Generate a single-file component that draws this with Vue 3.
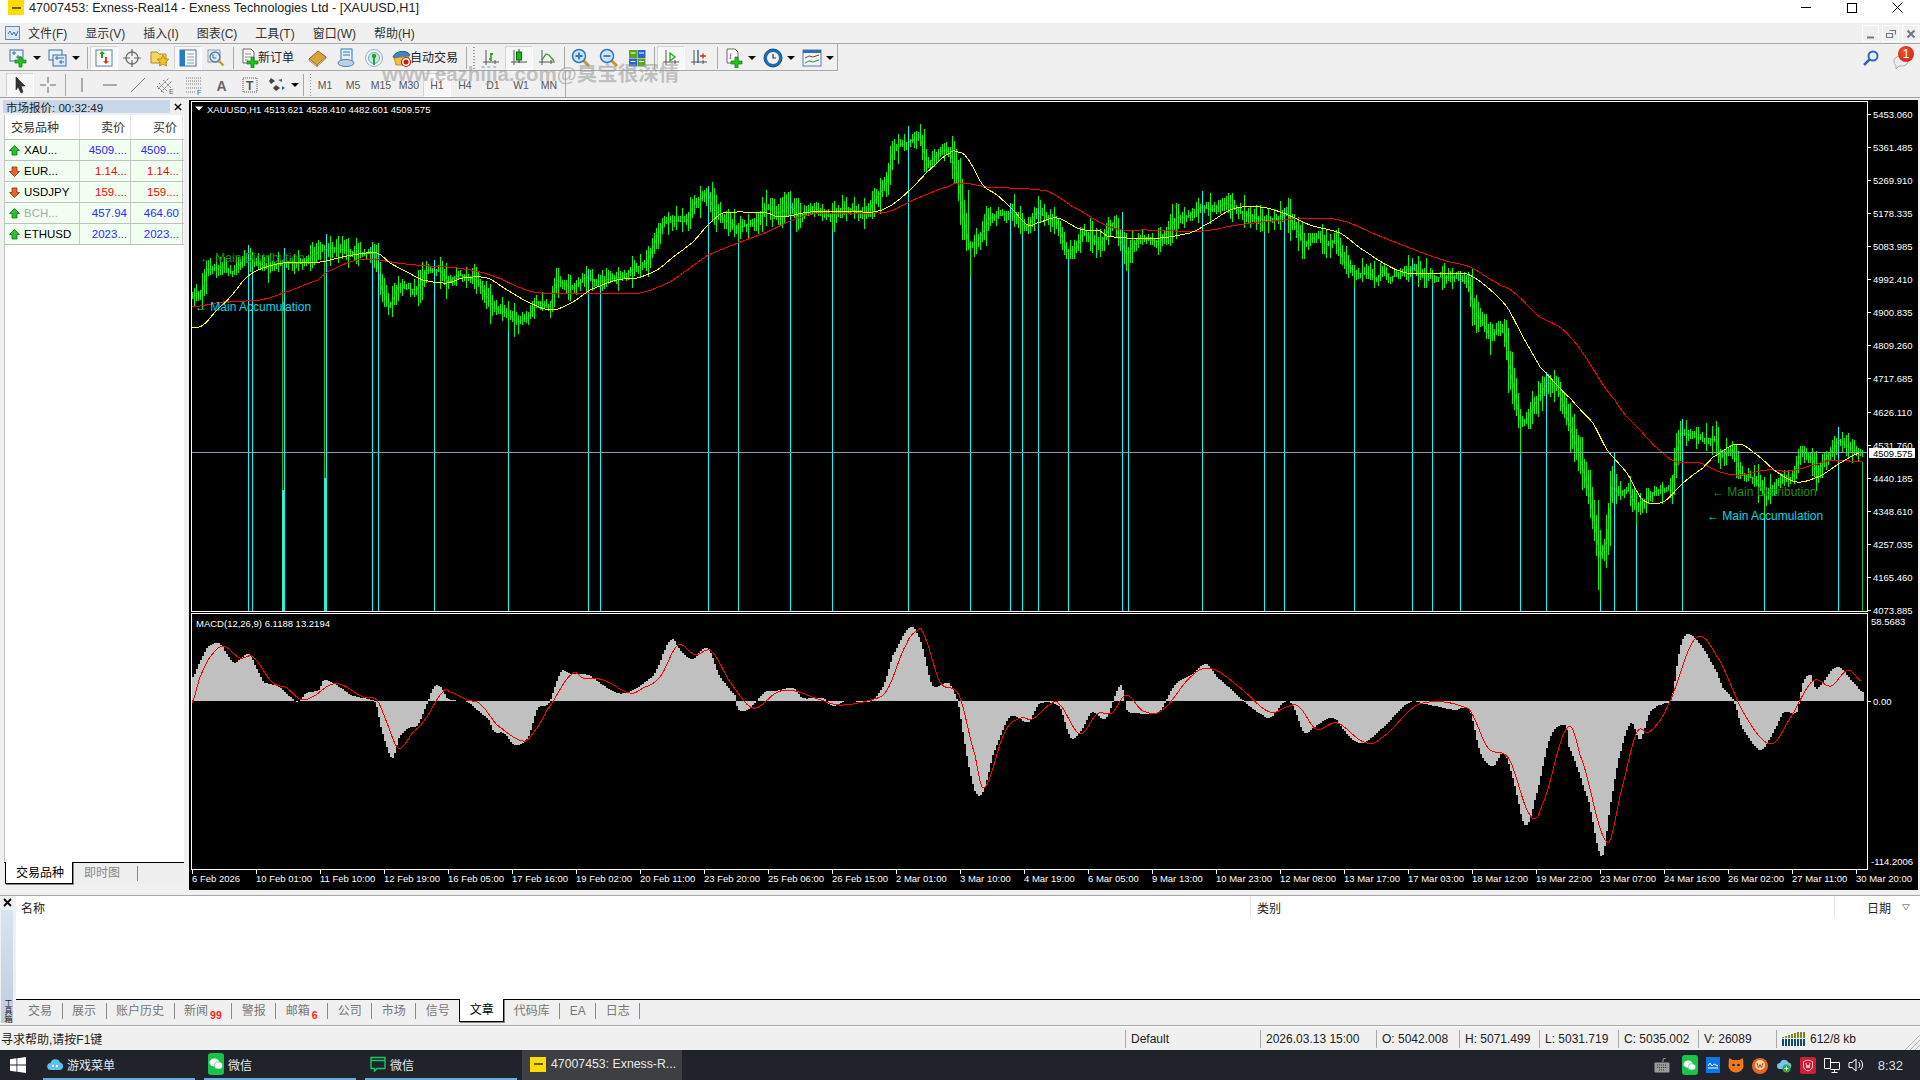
<script setup>
// -- Traced chart data (page pixels, x then y) --

const pricePts = [193,297,203,290,207,270,223,267,233,272,247,257,267,267,287,263,303,263,322,250,337,248,357,253,375,253,382,290,390,307,398,287,417,290,427,270,440,270,448,282,460,275,477,280,485,293,493,307,507,313,517,322,528,318,537,302,550,307,557,280,573,288,587,277,598,282,620,277,647,263,663,223,673,220,687,222,693,205,708,193,713,208,723,218,738,228,757,222,767,208,780,213,790,205,800,218,813,207,830,217,843,208,867,213,877,198,887,182,893,148,907,143,920,137,927,165,943,150,950,152,957,172,963,215,970,248,980,238,990,218,1003,215,1013,212,1027,228,1037,212,1057,222,1067,252,1077,248,1083,232,1100,245,1113,222,1127,255,1140,238,1160,242,1177,218,1187,217,1202,207,1213,210,1227,203,1243,213,1263,220,1277,220,1287,213,1297,230,1305,245,1317,235,1327,245,1337,240,1343,260,1357,273,1370,273,1377,280,1383,270,1390,278,1403,273,1413,268,1423,275,1437,277,1453,277,1468,282,1475,313,1483,322,1490,337,1498,330,1505,333,1508,360,1513,383,1520,420,1527,420,1537,400,1547,383,1557,385,1567,417,1580,457,1590,497,1600,557,1607,540,1612,487,1620,493,1628,490,1637,507,1645,500,1657,490,1672,490,1677,450,1682,433,1697,437,1717,440,1720,457,1733,450,1740,473,1757,480,1765,495,1777,483,1793,477,1802,450,1813,460,1817,473,1827,457,1840,440,1853,450,1862,453];

const yellowPts = [192,328,203,325,217,310,230,297,247,277,263,268,283,263,320,262,347,256,377,253,390,263,407,272,423,280,447,283,463,278,487,278,507,290,530,303,552,310,573,302,590,290,617,280,637,278,657,270,673,257,693,242,708,225,723,213,767,213,780,217,810,212,847,211,873,212,890,206,910,190,927,172,950,153,958,152,967,158,983,185,997,195,1013,210,1028,225,1037,223,1057,218,1080,229,1100,231,1107,236,1127,238,1160,238,1190,233,1203,226,1233,209,1260,207,1283,213,1310,225,1340,233,1360,248,1387,265,1407,273,1467,274,1487,287,1507,307,1523,337,1540,367,1572,400,1593,423,1607,450,1627,473,1643,500,1663,502,1683,483,1703,468,1713,457,1738,444,1757,455,1777,472,1797,482,1820,476,1840,463,1862,452];

const redPts = [192,307,223,302,260,300,283,293,318,280,327,272,350,262,370,259,397,263,427,266,457,268,490,275,533,292,590,293,640,293,670,282,690,268,708,255,738,243,767,232,793,220,813,214,887,212,913,200,947,187,960,183,987,187,1047,191,1073,207,1113,228,1147,230,1203,231,1237,225,1283,220,1317,218,1343,221,1377,235,1410,248,1443,260,1470,267,1497,283,1513,292,1537,315,1570,337,1615,400,1640,430,1663,453,1677,462,1700,463,1720,472,1740,475,1767,470,1790,471,1817,464,1833,460,1862,462];

const histPts = [192,677,200,660,207,647,218,643,227,655,233,663,248,654,255,667,263,682,277,686,290,697,297,702,305,693,318,690,323,680,337,686,350,695,367,699,375,703,380,727,387,750,392,758,398,738,408,728,417,725,427,702,433,687,440,687,447,699,467,702,480,713,488,720,493,732,503,733,513,745,527,738,537,708,548,703,560,672,570,674,587,675,607,688,623,693,653,675,670,640,680,651,691,659,707,648,718,675,734,695,737,710,749,708,764,692,774,691,793,688,801,698,823,698,831,706,845,701,871,701,883,685,892,655,910,627,921,645,931,685,948,683,957,702,963,738,969,772,975,793,982,792,992,755,1009,717,1028,722,1038,704,1059,707,1070,738,1082,728,1091,712,1105,718,1120,685,1126,710,1135,713,1158,712,1174,685,1193,673,1205,664,1216,677,1242,700,1262,715,1270,717,1285,701,1293,708,1303,733,1316,725,1333,718,1347,735,1360,743,1379,730,1408,703,1423,704,1454,710,1469,710,1479,752,1492,766,1503,753,1513,782,1524,825,1534,800,1549,738,1565,725,1568,747,1588,802,1601,857,1609,808,1618,758,1630,723,1639,740,1649,712,1664,703,1671,698,1679,648,1687,634,1702,648,1716,672,1722,688,1733,701,1741,728,1760,750,1775,728,1783,712,1796,712,1802,683,1810,675,1815,689,1836,667,1855,685,1863,693];

const signalPts = [192,703,200,677,210,657,223,646,240,658,253,657,272,682,287,688,300,699,312,697,330,685,342,685,363,697,377,700,387,723,397,747,403,746,413,732,423,722,443,692,450,692,467,700,480,704,497,725,523,741,533,733,547,710,572,674,583,678,603,680,630,693,643,688,660,677,678,645,695,655,711,651,730,682,753,708,778,692,795,691,812,697,839,705,871,700,887,690,906,645,917,631,923,633,940,682,959,695,975,755,984,788,1005,732,1021,718,1032,719,1051,704,1059,704,1080,734,1097,714,1112,713,1126,695,1143,711,1162,710,1193,675,1212,669,1239,687,1270,712,1289,706,1299,707,1316,729,1337,723,1364,742,1381,738,1419,704,1469,709,1488,748,1509,759,1530,815,1542,805,1567,728,1580,755,1607,842,1622,788,1637,732,1649,732,1668,705,1695,639,1716,655,1745,715,1771,744,1790,718,1813,681,1831,686,1848,670,1861,681];

// x and top of each signal line (all run down to the pane bottom)
const signalLines = [
  [248,245],[252,267],[284,248],[326,234],[372,246],[378,254],[434,260],[508,331],[588,269],[600,287],
  [708,187],[738,242],[790,198],[832,230],[908,126],[970,277],[1010,203],[1022,235],[1038,208],[1068,258],
  [1122,212],[1128,271],[1202,191],[1264,232],[1284,208],[1354,287],[1412,261],[1432,285],[1460,271],
  [1520,455],[1546,372],[1600,600],[1614,452],[1636,525],[1682,419],[1764,518],[1838,427]
];

const priceTicks = ['5453.060','5361.485','5269.910','5178.335','5083.985','4992.410','4900.835','4809.260','4717.685','4626.110','4531.760','4440.185','4348.610','4257.035','4165.460','4073.885']
  .map((label, i) => ({ label, y: Math.round(114 + i * 33.06) }));

const timeLabels = ['6 Feb 2026','10 Feb 01:00','11 Feb 10:00','12 Feb 19:00','16 Feb 05:00','17 Feb 16:00','19 Feb 02:00','20 Feb 11:00','23 Feb 20:00','25 Feb 06:00','26 Feb 15:00','2 Mar 01:00','3 Mar 10:00','4 Mar 19:00','6 Mar 05:00','9 Mar 13:00','10 Mar 23:00','12 Mar 08:00','13 Mar 17:00','17 Mar 03:00','18 Mar 12:00','19 Mar 22:00','23 Mar 07:00','24 Mar 16:00','26 Mar 02:00','27 Mar 11:00','30 Mar 20:00']
  .map((label, i) => ({ label, x: 192 + i * 64 }));

// -- Chart helpers --

// Catmull-Rom through the traced points so the curves don't look polygonal
function smooth(flat) {
  const out = [];
  const n = flat.length / 2;
  for (let i = 0; i < n - 1; i++) {
    const x0 = flat[i * 2], x1 = flat[i * 2 + 2];
    const a = flat[Math.max(i - 1, 0) * 2 + 1];
    const b = flat[i * 2 + 1];
    const c = flat[i * 2 + 3];
    const d = flat[Math.min(i + 2, n - 1) * 2 + 1];
    const steps = Math.max(Math.round((x1 - x0) / 2), 1);
    for (let s = 0; s < steps; s++) {
      const t = s / steps;
      const y = 0.5 * (2 * b + (c - a) * t + (2 * a - 5 * b + 4 * c - d) * t * t + (3 * b - a - 3 * c + d) * t * t * t);
      out.push(x0 + (x1 - x0) * t, Math.round(y * 10) / 10);
    }
  }
  out.push(flat[flat.length - 2], flat[flat.length - 1]);
  return out;
}

function toPoints(flat) {
  const out = [];
  for (let i = 0; i < flat.length; i += 2) out.push(flat[i] + ',' + flat[i + 1]);
  return out.join(' ');
}

function valueAt(flat, x) {
  for (let i = 0; i < flat.length - 2; i += 2) {
    if (x <= flat[i + 2]) {
      const t = (x - flat[i]) / (flat[i + 2] - flat[i]);
      return flat[i + 1] + Math.max(t, 0) * (flat[i + 3] - flat[i + 1]);
    }
  }
  return flat[flat.length - 1];
}

// Small seeded random so the bars stay the same between runs
let seed = 47007453;
function rnd() {
  seed = (seed * 1664525 + 1013904223) % 4294967296;
  return seed / 4294967296;
}

function buildBars() {
  let d = '';
  for (let x = 192; x < 1864; x += 2) {
    const c = valueAt(pricePts, x);
    const slope = Math.abs(valueAt(pricePts, x + 3) - valueAt(pricePts, x - 3)) / 6;
    const r = rnd();
    const half = 2.5 + r * r * r * 13 + slope * 3;
    const shift = (rnd() - 0.5) * 6;
    d += `M${x}.5 ${Math.round(c + shift - half)}V${Math.round(c + shift + half)}`;
  }
  // The bar behind a signal line reaches down to where the line starts
  for (const [x, top] of signalLines) {
    d += `M${x}.5 ${Math.round(valueAt(pricePts, x))}V${top}`;
  }
  return d;
}

function buildHist() {
  const dense = smooth(histPts);
  let d = '';
  for (let x = 192; x < 1864; x += 2) {
    d += `M${x + 1} 701V${Math.round(valueAt(dense, x))}`;
  }
  return d;
}

const barsPath = buildBars();
const histPath = buildHist();
const pricePoly = toPoints(pricePts);
const yellowPoly = toPoints(smooth(yellowPts));
const redPoly = toPoints(smooth(redPts));
const signalPoly = toPoints(smooth(signalPts));

// -- Toolbar icons --

const axes = '<path d="M5 2v15M2 14h16M14 12v4" stroke="#555" fill="none"/>';

const icons = {
  addChart: '<rect x="1" y="2" width="13" height="11" fill="#eaf1fa" stroke="#3a6ea8"/><path d="M3 5h4M5 3v4M7 9h5M9 7v4" stroke="#3a6ea8"/><path d="M10 9h3v3h4v3h-4v4h-3v-4H6v-3h4z" fill="#1cc41c" stroke="#0a7a0a" stroke-width=".7"/>',
  profile: '<rect x="1" y="2" width="13" height="10" fill="#eaf1fa" stroke="#3a6ea8"/><rect x="5" y="7" width="13" height="11" fill="#dfe9f6" stroke="#3a6ea8"/><path d="M7 10h9M9 8v4M11 14h5M13 12v4" stroke="#3a6ea8"/>',
  scroll: '<rect x="2" y="2" width="16" height="16" fill="#fff" stroke="#5f7f9f"/><path d="M8 3l3 3H9v4H7V6H5z" fill="#19a019"/><path d="M12 16l-3-3h2V9h2v4h2z" fill="#d8401c"/>',
  crosshair: '<circle cx="10" cy="10" r="6" fill="none" stroke="#777" stroke-width="1.4"/><path d="M10 1v7M10 12v7M1 10h7M12 10h7" stroke="#666" stroke-width="1.2"/>',
  folder: '<path d="M1 4h6l2 2h7v9H1z" fill="#f6d666" stroke="#b08a20"/><path d="M13 7l1.8 3.6 4 .6-2.9 2.8.7 4-3.6-1.9-3.6 1.9.7-4-2.9-2.8 4-.6z" fill="#f2c020" stroke="#a07a10" stroke-width=".7"/>',
  market: '<rect x="2" y="2" width="16" height="16" fill="#fff" stroke="#4a6c94"/><rect x="2" y="2" width="5" height="16" fill="#2a78c8"/><path d="M9 6h7M9 9h7M9 12h7M9 15h7" stroke="#7a93b0"/>',
  tester: '<rect x="2" y="2" width="12" height="12" fill="#f2f2f2" stroke="#8b9bad"/><circle cx="9" cy="9" r="5" fill="#d5e6f7" stroke="#4d7ba8" stroke-width="1.3"/><path d="M12.5 12.5l5 5" stroke="#c79a30" stroke-width="2.4"/><path d="M7 6v4h3" stroke="#4d7ba8" fill="none"/>',
  newOrder: '<path d="M3 1h8l3 3v11H3z" fill="#fff" stroke="#666"/><path d="M5 6h6M5 9h6M5 12h3" stroke="#888"/><path d="M11 9h3v4h4v3h-4v4h-3v-4H7v-3h4z" fill="#1cc41c" stroke="#0a7a0a" stroke-width=".7"/>',
  book: '<path d="M1 11l9-8 8 6-9 8z" fill="#d6a53a" stroke="#8a6418"/><path d="M1 11l8 6v1.5L1 12.5zM18 9v1.5L9 18.500V17z" fill="#f3e3a8" stroke="#8a6418" stroke-width=".6"/>',
  people: '<rect x="5" y="1" width="11" height="13" fill="#e6f0fb" stroke="#2f78c0"/><path d="M7 4h7M7 7h7" stroke="#2f78c0"/><ellipse cx="10" cy="15" rx="8" ry="3.500" fill="#bcd2ea" stroke="#5a7fa6"/>',
  signal: '<circle cx="10" cy="10" r="8.500" fill="#eef3f6" stroke="#9ab2c0"/><circle cx="10" cy="10" r="5.500" fill="#cfe7d8" stroke="#6cb0c0"/><path d="M10 9v8" stroke="#2a9a3a" stroke-width="2"/><circle cx="10" cy="8" r="2.200" fill="#2a9a3a"/>',
  autotrade: '<path d="M1 9c2-6 14-8 17-2-4 3-13 4-17 2z" fill="#3a86c8" stroke="#1c5a90"/><path d="M2 10l2 7h9l4-9z" fill="#f0c040" stroke="#a07a10" stroke-width=".7"/><circle cx="14" cy="14" r="4.500" fill="#fff" stroke="#d01818" stroke-width="1.200"/><circle cx="14" cy="14" r="2.500" fill="#d01818"/>',
  bars: axes + '<path d="M10 5v8M8 11h2M10 6h2" stroke="#0e9a0e" stroke-width="1.400" fill="none"/>',
  candle: axes.replace('M14 12v4', '') + '<path d="M10 1v14" stroke="#333"/><rect x="7.500" y="4" width="5" height="8" fill="#12c012" stroke="#0a6a0a"/>',
  lineChart: axes + '<path d="M5 12l4-6 3 1 5 6" stroke="#2f9a2f" stroke-width="1.300" fill="none"/>',
  zoomIn: '<path d="M12 12l6 6" stroke="#c79a30" stroke-width="3"/><circle cx="8" cy="8" r="6.500" fill="#cfe4f8" stroke="#2f78c0" stroke-width="1.500"/><path d="M4.500 8h7M8 4.500v7" stroke="#2f78c0" stroke-width="1.800"/>',
  zoomOut: '<path d="M12 12l6 6" stroke="#c79a30" stroke-width="3"/><circle cx="8" cy="8" r="6.500" fill="#cfe4f8" stroke="#2f78c0" stroke-width="1.500"/><path d="M4.500 8h7" stroke="#2f78c0" stroke-width="1.800"/>',
  tile: '<rect x="2" y="2" width="8" height="8" fill="#56a818"/><rect x="10.500" y="2" width="8" height="8" fill="#2a64c8"/><rect x="2" y="10.500" width="8" height="8" fill="#2a64c8"/><rect x="10.500" y="10.500" width="8" height="8" fill="#56a818"/><path d="M3.500 5h5M12 5h5M3.500 13.500h5M12 13.500h5" stroke="#fff"/>',
  shift: axes + '<path d="M9 5l5 4-5 4z" fill="none" stroke="#1ca81c" stroke-width="1.300"/>',
  autoShift: axes + '<path d="M9 2v13" stroke="#2a5aa8" stroke-width="1.400"/><path d="M11 8h6M14 5.500v5" stroke="#c83a1c" stroke-width="1.500"/>',
  template: '<path d="M3 1h8l3 3v11H3z" fill="#fff" stroke="#666"/><text x="5" y="11" font-size="9" font-family="Liberation Serif" fill="#444">f</text><path d="M11 9h3v4h4v3h-4v4h-3v-4H7v-3h4z" fill="#1cc41c" stroke="#0a7a0a" stroke-width=".7"/>',
  clock: '<circle cx="10" cy="10" r="9" fill="#1c6cb8" stroke="#124a86"/><circle cx="10" cy="10" r="6" fill="#f4f4f4"/><path d="M10 6v4h3" stroke="#333" stroke-width="1.200" fill="none"/>',
  indicators: '<rect x="1" y="2" width="18" height="16" fill="#eef3f9" stroke="#5f7f9f"/><rect x="1" y="2" width="18" height="3" fill="#2f6cb8"/><path d="M3 10l4-2 4 1 6-2" stroke="#a03a1c" fill="none"/><path d="M3 15l4-2 4 1 6-2" stroke="#2a9a3a" fill="none"/>',
  cursor: '<path d="M6 2l9 9h-4l2 6-2 1-3-6-2 3z" fill="#333" stroke="#222" stroke-width=".6"/>',
  cross: '<path d="M10 2v6M10 12v6M2 10h6M12 10h6" stroke="#666"/>',
  vline: '<path d="M10 3v14" stroke="#666"/>',
  hline: '<path d="M3 10h14" stroke="#666"/>',
  trend: '<path d="M3 17L17 3" stroke="#777"/>',
  channel: '<path d="M2 14L13 3M5 17L16 6M3 8l8 8M7 5l8 8M1 11l7 7" stroke="#777" stroke-dasharray="2 1"/><text x="13" y="19" font-size="7" font-family="Liberation Sans" fill="#555">E</text>',
  fibo: '<path d="M2 3h15M2 6h15M2 9h15M2 13h15M2 17h10" stroke="#777" stroke-dasharray="1 1"/><text x="13" y="20" font-size="7" font-family="Liberation Sans" fill="#555">F</text>',
  textA: '<text x="4.500" y="16" font-size="14" font-weight="700" font-family="Liberation Sans" fill="#666">A</text>',
  textT: '<rect x="3" y="3" width="14" height="14" fill="none" stroke="#555" stroke-dasharray="1 1"/><text x="6" y="15" font-size="12" font-weight="700" font-family="Liberation Sans" fill="#555">T</text>',
  arrows: '<path d="M4 3l4 3-4 3-2-3zM9 10l4 3-4 3-3-3z" fill="#444"/><path d="M11 5l4-1v3zM15 11l3 2-3 2z" fill="#2a6a9a"/>'
};

const mainTools = [
  { icon: 'addChart', drop: true }, { icon: 'profile', drop: true }, { sep: true },
  { icon: 'scroll', active: true }, { icon: 'crosshair' }, { icon: 'folder' }, { icon: 'market', active: true }, { icon: 'tester' }, { sep: true },
  { icon: 'newOrder', label: '新订单', w: 68 }, { icon: 'book' }, { icon: 'people' }, { icon: 'signal' },
  { icon: 'autotrade', label: '自动交易', w: 78 }, { grip: true },
  { icon: 'bars' }, { icon: 'candle', active: true }, { icon: 'lineChart' }, { sep: true },
  { icon: 'zoomIn' }, { icon: 'zoomOut' }, { icon: 'tile' }, { sep: true },
  { icon: 'shift', active: true }, { icon: 'autoShift' }, { sep: true, wide: true },
  { icon: 'template', drop: true }, { icon: 'clock', drop: true }, { icon: 'indicators', drop: true }
];

const drawTools = [
  { icon: 'cursor', active: true }, { icon: 'cross' }, { sep: true },
  { icon: 'vline' }, { icon: 'hline' }, { icon: 'trend' }, { icon: 'channel' }, { icon: 'fibo' }, { icon: 'textA' }, { icon: 'textT' },
  { icon: 'arrows', drop: true }, { grip: true },
  { period: 'M1' }, { period: 'M5' }, { period: 'M15' }, { period: 'M30' }, { period: 'H1', active: true },
  { period: 'H4' }, { period: 'D1' }, { period: 'W1' }, { period: 'MN' }
];

const menus = ['文件(F)', '显示(V)', '插入(I)', '图表(C)', '工具(T)', '窗口(W)', '帮助(H)'];

const quotes = [
  { name: 'XAU...', bid: '4509....', ask: '4509....', up: true },
  { name: 'EUR...', bid: '1.14...', ask: '1.14...', up: false },
  { name: 'USDJPY', bid: '159....', ask: '159....', up: false },
  { name: 'BCH...', bid: '457.94', ask: '464.60', up: true, off: true },
  { name: 'ETHUSD', bid: '2023...', ask: '2023...', up: true }
];

const termTabs = [
  { name: '交易' }, { name: '展示' }, { name: '账户历史' }, { name: '新闻', badge: '99' }, { name: '警报' },
  { name: '邮箱', badge: '6' }, { name: '公司' }, { name: '市场' }, { name: '信号' }, { name: '文章', active: true },
  { name: '代码库' }, { name: 'EA' }, { name: '日志' }
];

const statusCells = [
  { text: 'Default', w: 135 }, { text: '2026.03.13 15:00', w: 116 }, { text: 'O: 5042.008', w: 83 },
  { text: 'H: 5071.499', w: 80 }, { text: 'L: 5031.719', w: 79 }, { text: 'C: 5035.002', w: 80 }, { text: 'V: 26089', w: 78 }
];
</script>

<template>
  <div class="app">
    <!-- Window title -->
    <header class="titlebar">
      <span class="mt-icon"><i></i></span>
      <span class="title-text">47007453: Exness-Real14 - Exness Technologies Ltd - [XAUUSD,H1]</span>
      <div class="win-btns">
        <svg width="46" height="16" viewBox="0 0 46 16"><path d="M18 7.500h10" stroke="#000" /></svg>
        <svg width="46" height="16" viewBox="0 0 46 16"><rect x="18.500" y="3.500" width="9" height="9" fill="none" stroke="#000" /></svg>
        <svg width="45" height="16" viewBox="0 0 45 16"><path d="M17.500 2.500l10 10M27.500 2.500l-10 10" stroke="#000" /></svg>
      </div>
    </header>

    <!-- Menu -->
    <nav class="menubar">
      <svg class="doc-icon" width="16" height="16" viewBox="0 0 16 16">
        <rect x=".5" y="1.500" width="14" height="13" fill="#dfe9f6" stroke="#6a8cb4" />
        <path d="M3 9l2-3 2 4 2-3 2 4 2-5" fill="none" stroke="#3a6ea8" />
      </svg>
      <span v-for="m in menus" :key="m" class="menu-item">{{ m }}</span>
      <div class="mdi-btns">
        <span class="mdi-btn"><svg width="10" height="10" viewBox="0 0 10 10"><path d="M1 8.500h7" stroke="#6a7a8a" stroke-width="2" /></svg></span>
        <span class="mdi-btn"><svg width="10" height="10" viewBox="0 0 10 10"><path d="M3.500 1.500h6v4M.5 4.500h6v4h-6z" fill="none" stroke="#6a7a8a" stroke-width="1.200" /></svg></span>
        <span class="mdi-btn"><svg width="10" height="10" viewBox="0 0 10 10"><path d="M1.500 1.500l7 7M8.500 1.500l-7 7" stroke="#6a7a8a" stroke-width="2" /></svg></span>
      </div>
    </nav>

    <!-- Toolbars -->
    <div class="toolrow toolrow-main">
      <div class="tools tools-main">
        <template v-for="(t, i) in mainTools" :key="i">
          <span v-if="t.sep" class="sep" :class="{ 'sep-wide': t.wide }"></span>
          <span v-else-if="t.grip" class="grip"></span>
          <span v-else class="tb" :class="{ active: t.active, drop: t.drop, labeled: t.label }" :style="t.w ? { width: t.w + 'px' } : null">
            <svg class="ic" viewBox="0 0 20 20" width="20" height="20" v-html="icons[t.icon]"></svg>
            <span v-if="t.label" class="tb-label">{{ t.label }}</span>
            <i v-if="t.drop" class="caret"></i>
          </span>
        </template>
      </div>
      <div class="tools-right">
        <svg width="18" height="18" viewBox="0 0 18 18">
          <circle cx="11" cy="7" r="4.500" fill="#eef5fc" stroke="#2a64c8" stroke-width="2" />
          <path d="M7.500 10.500L2 16" stroke="#2a64c8" stroke-width="2.500" />
        </svg>
        <span class="bubble">
          <svg width="16" height="14" viewBox="0 0 16 14"><path d="M8 1c4 0 7 2 7 5s-3 5-7 5H6l-3 3v-3.500C1.500 9.500 1 8 1 6c0-3 3-5 7-5z" fill="#eee" stroke="#aaa" /></svg>
          <b class="badge">1</b>
        </span>
      </div>
    </div>
    <div class="toolrow toolrow-draw">
      <div class="tools tools-draw">
        <template v-for="(t, i) in drawTools" :key="i">
          <span v-if="t.sep" class="sep"></span>
          <span v-else-if="t.grip" class="grip grip-draw"></span>
          <span v-else-if="t.period" class="tb period" :class="{ active: t.active }">{{ t.period }}</span>
          <span v-else class="tb" :class="{ active: t.active, drop: t.drop }">
            <svg class="ic" viewBox="0 0 20 20" width="20" height="20" v-html="icons[t.icon]"></svg>
            <i v-if="t.drop" class="caret"></i>
          </span>
        </template>
      </div>
    </div>
    <div class="watermark">www.eazhijia.com@臭宝很深情</div>

    <!-- Market watch and chart -->
    <main class="workspace">
      <aside class="market">
        <div class="market-head">
          <span class="market-title">市场报价: 00:32:49</span>
          <svg width="8" height="8" viewBox="0 0 9 9"><path d="M1 1l7 7M8 1l-7 7" stroke="#000" stroke-width="1.600" /></svg>
        </div>
        <div class="market-body">
          <div class="mrow mrow-head">
            <span class="mcell mname">交易品种</span>
            <span class="mcell mnum">卖价</span>
            <span class="mcell mnum">买价</span>
          </div>
          <div v-for="q in quotes" :key="q.name" class="mrow">
            <span class="mcell mname" :class="{ off: q.off }">
              <svg width="11" height="11" viewBox="0 0 11 11">
                <path v-if="q.up" d="M5.500 .5l5 5H8v4.500H3V5.500H.5z" fill="#2cc02c" stroke="#1a6a1a" stroke-width=".8" />
                <path v-else d="M5.500 10.500l5-5H8V1H3v4.500H.5z" fill="#f0602c" stroke="#8a3010" stroke-width=".8" />
              </svg>
              {{ q.name }}
            </span>
            <span class="mcell mnum" :class="q.up ? 'blue' : 'red'">{{ q.bid }}</span>
            <span class="mcell mnum" :class="q.up ? 'blue' : 'red'">{{ q.ask }}</span>
          </div>
        </div>
        <div class="market-tabs">
          <span class="mtab active">交易品种</span>
          <span class="mtab">即时图</span>
        </div>
      </aside>

      <div class="chart">
        <svg width="1729" height="790" viewBox="189 100 1729 790" class="chart-svg" shape-rendering="crispEdges">
          <!-- Price pane -->
          <polyline :points="pricePoly" fill="none" stroke="#0a7a0a" />
          <path :d="barsPath" stroke="#00ff00" fill="none" />
          <path d="M1600.500 530V600M1598.500 500V590M968.500 190V250" stroke="#00ff00" />
          <path d="M282.500 263V611M324.500 250V611" stroke="#1fc01f" />
          <path d="M282.500 490V611M283.500 490V611M324.500 478V611M325.500 478V611" stroke="#38f0c8" />
          <path d="M1862.500 462V611" stroke="#1fc01f" />
          <path v-for="l in signalLines" :key="l[0]" :d="`M${l[0]}.5 ${l[1]}V611`" stroke="#00ffff" />
          <polyline :points="redPoly" fill="none" stroke="#ff0000" />
          <polyline :points="yellowPoly" fill="none" stroke="#ffff00" />
          <path d="M192 452.500H1867" stroke="#8a9db0" />

          <!-- MACD pane -->
          <path :d="histPath" stroke="#c0c0c0" stroke-width="2" fill="none" />
          <polyline :points="signalPoly" fill="none" stroke="#ff0000" />

          <!-- Frames and ticks -->
          <g stroke="#fff" fill="none">
            <path d="M191.500 101.500H1867.500V611.500H191.500Z" />
            <path d="M191.500 613.500H1867.500V869.500H191.500Z" />
            <path v-for="t in priceTicks" :key="t.label" :d="`M1868 ${t.y}.5h3`" />
            <path d="M1868 701.500h3" />
            <path v-for="t in timeLabels" :key="t.x" :d="`M${t.x}.5 870v4`" />
          </g>

          <g class="labels" shape-rendering="auto">
            <path d="M195 106.500h8l-4 4z" fill="#fff" />
            <text x="207" y="112.500" class="lbl">XAUUSD,H1  4513.621 4528.410 4482.601 4509.575</text>
            <text x="196" y="627" class="lbl">MACD(12,26,9) 6.1188 13.2194</text>
            <text v-for="t in priceTicks" :key="t.label" x="1873" :y="t.y + 3.5" class="lbl">{{ t.label }}</text>
            <text x="1871" y="625" class="lbl">58.5683</text>
            <text x="1873" y="704.500" class="lbl">0.00</text>
            <text x="1871" y="865" class="lbl">-114.2006</text>
            <text v-for="t in timeLabels" :key="t.x" :x="t.x" y="881.500" class="lbl">{{ t.label }}</text>
            <rect x="1869" y="448" width="46" height="10" fill="#fff" />
            <text x="1873" y="456.500" class="lbl lbl-dark">4509.575</text>
            <text x="200" y="262" class="note note-green">← Main Distribution</text>
            <text x="195" y="311" class="note note-cyan">← Main Accumulation</text>
            <text x="1712" y="496" class="note note-green">← Main Distribution</text>
            <text x="1707" y="520" class="note note-cyan">← Main Accumulation</text>
          </g>
        </svg>
      </div>
    </main>

    <!-- Terminal -->
    <section class="terminal">
      <div class="term-side">
        <svg class="term-close" width="9" height="9" viewBox="0 0 9 9"><path d="M1 1l7 7M8 1l-7 7" stroke="#000" stroke-width="1.800" /></svg>
        <div class="term-grad"><span class="term-name">工具箱</span></div>
      </div>
      <div class="term-main">
        <div class="term-list">
          <div class="term-head">
            <span class="th th-name">名称</span>
            <span class="th th-type">类别</span>
            <span class="th th-date">日期
              <svg width="8" height="8" viewBox="0 0 8 8"><path d="M.5 1.500h7L4 7z" fill="none" stroke="#999" /></svg>
            </span>
          </div>
        </div>
        <div class="term-tabs">
          <span v-for="t in termTabs" :key="t.name" class="ttab" :class="{ active: t.active }">
            {{ t.name }}<sub v-if="t.badge" class="ttab-badge">{{ t.badge }}</sub>
          </span>
        </div>
      </div>
    </section>

    <!-- Status bar -->
    <footer class="statusbar">
      <span class="st-help">寻求帮助,请按F1键</span>
      <span v-for="c in statusCells" :key="c.text" class="st-cell" :style="{ width: c.w + 'px' }">{{ c.text }}</span>
      <span class="st-cell st-mem">
        <svg width="24" height="14" viewBox="0 0 24 14" shape-rendering="crispEdges">
          <path d="M1 14V7M4 14V7M7 14V7M10 14V7M13 14V7M16 14V7M19 14V7M22 14V7" stroke="#0e4a6e" stroke-width="2" />
          <path d="M1 6V5M4 6V4M7 6V3M10 6V2M13 6V1M16 6V0M19 6V0M22 6V0" stroke="#7a8a1a" stroke-width="2" />
        </svg>
        612/8 kb
      </span>
      <svg class="st-grip" width="15" height="20" viewBox="0 0 15 20"><path d="M15 5L0 20M15 10L5 20M15 15L10 20" stroke="#b0b0b0" /></svg>
    </footer>

    <!-- Windows taskbar -->
    <div class="taskbar">
      <svg class="start" width="16" height="16" viewBox="0 0 16 16"><path d="M0 2.200l6.500-.9v6.300H0zM7.300 1.200L16 0v7.600H7.300zM0 8.400h6.500v6.300L0 13.800zM7.300 8.400H16V16l-8.700-1.200z" fill="#fff" /></svg>
      <div class="task task-1">
        <svg width="16" height="14" viewBox="0 0 16 14"><path d="M4 13a3.500 3.500 0 0 1-.5-7A5 5 0 0 1 13 5.500a3.800 3.800 0 0 1-.5 7.500z" fill="#5cc0f4" /><circle cx="6" cy="9" r="1.200" fill="#fff" /><circle cx="10" cy="9" r="1.200" fill="#fff" /></svg>
        <span>游戏菜单</span>
      </div>
      <div class="task task-2">
        <span class="wx-tile">
          <svg width="14" height="12" viewBox="0 0 14 12"><ellipse cx="5.500" cy="4.500" rx="5" ry="4" fill="#fff" /><ellipse cx="9.500" cy="7.500" rx="4.200" ry="3.500" fill="#fff" stroke="#19c24a" stroke-width=".6" /></svg>
        </span>
        <span>微信</span>
      </div>
      <div class="task task-3">
        <svg width="16" height="16" viewBox="0 0 16 16"><path d="M1 1.500h14v11H7l-2.500 2.500v-2.500H1z" fill="none" stroke="#17c964" stroke-width="1.400" /><path d="M1 4.500h14" stroke="#17c964" stroke-width="1.400" /></svg>
        <span>微信</span>
      </div>
      <div class="task task-4">
        <span class="mt-icon mt-icon-task"><i></i></span>
        <span class="task-name">47007453: Exness-R...</span>
      </div>
      <div class="tray">
        <svg class="tray-kbd" width="16" height="15" viewBox="0 0 16 15"><rect x=".5" y="4.500" width="15" height="10" rx="1" fill="#9a9a9a" /><path d="M3 7h10M3 9.500h10M5 12h6" stroke="#333" stroke-dasharray="1 1" /><path d="M9 4V1l3-1" stroke="#9a9a9a" fill="none" /></svg>
        <span class="wx-tile wx-tile-tray">
          <svg width="13" height="11" viewBox="0 0 14 12"><ellipse cx="5.500" cy="4.500" rx="5" ry="4" fill="#fff" /><ellipse cx="9.500" cy="7.500" rx="4.200" ry="3.500" fill="#fff" stroke="#19c24a" stroke-width=".6" /></svg>
        </span>
        <svg width="14" height="16" viewBox="0 0 14 16"><rect width="14" height="16" fill="#0a78e8" /><path d="M2 9l2-3 2 3 2-2 4 2M2 11h10" stroke="#fff" fill="none" /></svg>
        <svg width="16" height="16" viewBox="0 0 16 16"><path d="M1 1l3.500 2h7L15 1l.5 8A7.500 6.500 0 0 1 .5 9z" fill="#f07a1c" /><circle cx="5.500" cy="8" r="1.300" fill="#222" /><circle cx="10.500" cy="8" r="1.300" fill="#222" /></svg>
        <svg width="16" height="17" viewBox="0 0 16 17"><circle cx="8" cy="9" r="8" fill="#e8641c" /><circle cx="8" cy="8" r="5" fill="#f7d9a8" /><path d="M5 6l1.500 5L8 7.500 9.500 11 11 6" stroke="#c8401c" fill="none" /></svg>
        <svg width="16" height="15" viewBox="0 0 16 15"><path d="M4 11a3 3 0 0 1 0-6 4.500 4.500 0 0 1 8.500-.5A3.300 3.300 0 0 1 12.500 11z" fill="#7ac4ee" /><circle cx="10.500" cy="10.500" r="4" fill="#2aa84a" /><path d="M8.500 10.500h4M10.500 8.500v4" stroke="#fff" /></svg>
        <svg width="16" height="17" viewBox="0 0 16 17"><rect width="16" height="17" rx="2" fill="#d01c34" /><path d="M8 3l4.500 1.500V9c0 3-2 4-4.500 5C5.500 13 3.500 12 3.500 9V4.500z" fill="none" stroke="#f8c8c8" /><path d="M6 6l1 5 1-3 1 3 1-5" stroke="#f8c8c8" fill="none" /></svg>
        <svg width="16" height="16" viewBox="0 0 16 16"><path d="M.5 1.500h6v10h-6zM6.500 5.500h9v7h-9M10.500 12.500v3M7.500 15.500h6" fill="none" stroke="#fff" /></svg>
        <svg width="17" height="16" viewBox="0 0 17 16"><path d="M1 5.500h3l4-3.500v12l-4-3.500H1z" fill="none" stroke="#fff" /><path d="M10.500 5a4 4 0 0 1 0 6M12.500 3a7 7 0 0 1 0 10" fill="none" stroke="#fff" /></svg>
        <span class="clock">8:32</span>
      </div>
    </div>
  </div>
</template>

<style scoped>
.app {
  position: relative;
  width: 1920px;
  height: 1080px;
  display: flex;
  flex-direction: column;
  overflow: hidden;
  background: #f0f0f0;
  font-family: "Liberation Sans", "Noto Sans CJK SC", sans-serif;
  font-size: 12px;
  color: #000;
}

.titlebar {
  height: 23px;
  flex: none;
  display: flex;
  background: #fff;
  padding-left: 8px;
}

.mt-icon {
  width: 16px;
  height: 15px;
  flex: none;
  background: #ffdc00;
  display: flex;
  align-items: center;
  justify-content: center;
}

.mt-icon i {
  width: 9px;
  height: 2px;
  background: #6a5a10;
}

.title-text {
  margin-left: 5px;
  font-size: 12.640px;
  line-height: 16px;
  color: #222;
}

.win-btns {
  margin-left: auto;
  display: flex;
}

.menubar {
  height: 20px;
  flex: none;
  display: flex;
  align-items: center;
  padding-left: 5px;
  border-bottom: 1px solid #a8a8a8;
}

.doc-icon {
  margin-right: 7px;
}

.menu-item {
  margin-right: 18px;
  padding-bottom: 2px;
  font-size: 12px;
  color: #333;
}

.mdi-btns {
  margin-left: auto;
  display: flex;
  gap: 3px;
  padding-right: 1px;
  margin-top: 1px;
}

.mdi-btn {
  width: 17px;
  height: 17px;
  border: 1px solid #fff;
  box-sizing: border-box;
  display: flex;
  align-items: center;
  justify-content: center;
}

.toolrow {
  flex: none;
  display: flex;
  align-items: stretch;
}

.toolrow-main {
  height: 27px;
}

.toolrow-draw {
  height: 27px;
  border-bottom: 1px solid #a0a0a0;
  box-sizing: border-box;
}

.tools {
  display: flex;
  align-items: center;
  border-right: 1px solid #a8a8a8;
  box-sizing: border-box;
  padding-top: 1px;
}

.tools-main {
  width: 838px;
  padding-left: 6px;
  border-bottom: 1px solid #a8a8a8;
}

.tools-draw {
  width: 566px;
  padding-left: 6px;
}

.tb {
  width: 28px;
  height: 24px;
  flex: none;
  box-sizing: border-box;
  display: flex;
  align-items: center;
  justify-content: center;
  position: relative;
}

.tb.drop {
  width: 39px;
  justify-content: flex-start;
  padding-left: 3px;
}

.tb.labeled {
  justify-content: flex-start;
  padding-left: 4px;
}

.tb.active {
  background: #f7f7f7;
  border: 1px solid #d4d4d4;
  border-right-color: #fff;
  border-bottom-color: #fff;
}

.tb-label {
  margin-left: -2px;
  padding-bottom: 3px;
  font-size: 12px;
  color: #222;
}

.caret {
  position: absolute;
  left: 27px;
  top: 10px;
  border-top: 4px solid #000;
  border-left: 4px solid transparent;
  border-right: 4px solid transparent;
}

.period {
  font-size: 10.500px;
  color: #555;
}

.sep {
  width: 6px;
  height: 22px;
  flex: none;
  background: linear-gradient(#a8a8a8, #a8a8a8) center / 1px 100% no-repeat;
}

.sep-wide {
  width: 8px;
}

.grip {
  width: 11px;
  height: 22px;
  flex: none;
  background: repeating-linear-gradient(#999 0 1px, transparent 1px 3px) 6px 0 / 2px 100% no-repeat;
  border-left: 1px solid #a8a8a8;
  box-sizing: border-box;
}

.grip-draw {
  width: 8px;
}

.tools-right {
  margin-left: auto;
  display: flex;
  align-items: center;
  gap: 13px;
  padding: 0 7px 0 0;
}

.bubble {
  position: relative;
  width: 20px;
  height: 22px;
  display: flex;
  align-items: flex-end;
}

.badge {
  position: absolute;
  left: 5px;
  top: -1px;
  width: 16px;
  height: 16px;
  border-radius: 50%;
  background: radial-gradient(circle at 40% 35%, #f05030, #c81c10);
  color: #fff;
  font-size: 12px;
  font-weight: 400;
  line-height: 16px;
  text-align: center;
}

.watermark {
  position: absolute;
  left: 382px;
  top: 62px;
  font-size: 20.500px;
  line-height: 24px;
  font-weight: 700;
  color: rgba(150, 150, 150, 0.55);
  white-space: nowrap;
}

.workspace {
  height: 792px;
  flex: none;
  display: flex;
}

.market {
  width: 189px;
  flex: none;
  box-sizing: border-box;
  padding: 2px 5px 5px 3px;
  display: flex;
  flex-direction: column;
}

.market-head {
  height: 13px;
  flex: none;
  display: flex;
  align-items: center;
  justify-content: space-between;
  padding-left: 3px;
  background: linear-gradient(90deg, #c9d8e8 0 167px, transparent 167px);
}

.market-head svg {
  margin-right: 2px;
}

.market-title {
  font-size: 11.500px;
  color: #222;
}

.market-body {
  flex: 1;
  margin: 2px 0 0 1px;
  background: #fff;
  border-left: 1px solid #c4c4c4;
}

.mrow {
  height: 21px;
  display: grid;
  grid-template-columns: 75px 51px 52px;
  background: #f1fff1;
  box-sizing: border-box;
  border-bottom: 1px solid #c0c0c0;
}

.mrow-head {
  height: 25px;
  background: #fff;
  border-bottom: 1px solid #c0c0c0;
}

.mcell {
  display: flex;
  align-items: center;
  box-sizing: border-box;
  border-right: 1px solid #c8c8c8;
  font-size: 11.500px;
  white-space: nowrap;
}

.mrow-head .mcell {
  font-size: 12px;
  color: #333;
  border-right-color: #e4e4e4;
  padding-bottom: 2px;
}

.mname {
  padding-left: 4px;
  gap: 4px;
}

.mrow-head .mname {
  padding-left: 6px;
}

.mnum {
  justify-content: flex-end;
  padding-right: 3px;
}

.mrow-head .mnum {
  padding-right: 5px;
}

.off {
  color: #aaa;
}

.blue {
  color: #2a2aff;
}

.red {
  color: #ff0000;
}

.market-tabs {
  height: 21px;
  flex: none;
  display: flex;
  margin-left: 1px;
  margin-bottom: 1px;
  border-top: 1px solid #000;
  background: #eee;
}

.mtab {
  width: 53px;
  padding-left: 11px;
  margin-top: 3px;
  height: 15px;
  line-height: 15px;
  color: #888;
  border-right: 1px solid #888;
}

.mtab.active {
  width: 68px;
  box-sizing: border-box;
  padding-left: 10px;
  margin: -1px 0 -2px 1px;
  height: 22px;
  line-height: 22px;
  background: #fff;
  color: #000;
  border: 1px solid #000;
  border-top: 0;
  box-shadow: 1px 1px 0 #888;
}

.chart {
  width: 1729px;
  height: 790px;
  margin-top: 2px;
  flex: none;
  background: #000;
}

.chart-svg {
  display: block;
}

.lbl {
  font-family: "Liberation Sans", sans-serif;
  font-size: 9.500px;
  fill: #fff;
  white-space: pre;
}

.lbl-dark {
  fill: #000;
}

.note {
  font-family: "Liberation Sans", sans-serif;
  font-size: 12px;
}

.note-green {
  fill: #228b22;
}

.note-cyan {
  fill: #00d8e8;
}

.terminal {
  height: 131px;
  flex: none;
  margin-top: 5px;
  display: flex;
  border-top: 1px solid #a8a8a8;
  border-bottom: 1px solid #a8a8a8;
  box-sizing: border-box;
}

.term-side {
  width: 16px;
  flex: none;
  display: flex;
  flex-direction: column;
  padding: 2px 0 2px 1px;
  box-sizing: border-box;
  gap: 3px;
}

.term-close {
  margin-left: 2px;
}

.term-grad {
  flex: 1;
  width: 12px;
  background: linear-gradient(#d8e4f0, #bccdde);
  display: flex;
  align-items: flex-end;
  justify-content: center;
  overflow: hidden;
}

.term-name {
  writing-mode: vertical-rl;
  font-size: 8px;
  line-height: 10px;
  color: #222;
}

.term-main {
  flex: 1;
  display: flex;
  flex-direction: column;
}

.term-list {
  height: 104px;
  flex: none;
  background: #fff;
  border-bottom: 1px solid #000;
  box-sizing: border-box;
}

.term-head {
  height: 22px;
  display: flex;
}

.th {
  display: flex;
  align-items: center;
  padding-left: 5px;
  box-sizing: border-box;
  color: #222;
  border-right: 1px solid #e4e4e4;
}

.th-name {
  width: 1235px;
}

.th-type {
  width: 584px;
  padding-left: 6px;
}

.th-date {
  flex: 1;
  border-right: 0;
  padding-left: 32px;
  gap: 11px;
}

.term-tabs {
  height: 24px;
  display: flex;
  align-items: flex-start;
}

.ttab {
  height: 16px;
  margin-top: 3px;
  padding: 0 9.500px;
  line-height: 16px;
  color: #777;
  border-right: 1px solid #888;
  white-space: nowrap;
}

.ttab:first-child {
  padding-left: 12px;
}

.ttab.active {
  height: 22px;
  margin-top: -1px;
  margin-left: -1px;
  line-height: 22px;
  background: #fff;
  color: #000;
  border: 1px solid #000;
  border-top: 0;
  box-shadow: 1px 1px 0 #888;
}

.ttab-badge {
  font-size: 10.500px;
  font-weight: 700;
  color: #ff2020;
  vertical-align: -4px;
  line-height: 0;
  margin-left: 2px;
}

.statusbar {
  height: 23px;
  flex: none;
  display: flex;
  align-items: center;
  border-top: 1px solid #fff;
  position: relative;
}

.st-help {
  width: 1125px;
  flex: none;
  padding-left: 1px;
  box-sizing: border-box;
  color: #222;
}

.st-cell {
  height: 18px;
  flex: none;
  box-sizing: border-box;
  padding-left: 5px;
  line-height: 18px;
  border-left: 1px solid #a8a8a8;
  white-space: nowrap;
  color: #222;
}

.st-mem {
  display: flex;
  align-items: center;
  gap: 4px;
}

.st-grip {
  position: absolute;
  right: 0;
  bottom: 0;
}

.taskbar {
  height: 30px;
  flex: none;
  display: flex;
  align-items: stretch;
  background: #20242a;
  color: #e8e8e8;
  font-size: 12px;
}

.start {
  margin: 7px 17px 0 10px;
}

.task {
  box-sizing: border-box;
  border-bottom: 2px solid #64aee6;
  display: flex;
  align-items: center;
  flex: none;
  white-space: nowrap;
}

.task-1 {
  width: 152px;
  padding-left: 4px;
  gap: 4px;
  margin-right: 9px;
}

.task-2 {
  width: 152px;
  padding-left: 4px;
  gap: 4px;
  margin-right: 9px;
}

.task-3 {
  width: 152px;
  padding-left: 5px;
  gap: 4px;
  margin-right: 5px;
}

.task-4 {
  width: 160px;
  padding-left: 8px;
  gap: 5px;
  background: #3d3f42;
  border-bottom-color: #3d3f42;
}

.task-name {
  font-size: 12.300px;
}

.wx-tile {
  width: 16px;
  height: 22px;
  border-radius: 3px;
  background: #19c24a;
  display: flex;
  align-items: center;
  justify-content: center;
}

.wx-tile-tray {
  height: 20px;
}

.tray {
  margin-left: auto;
  display: flex;
  align-items: center;
  gap: 8px;
  padding-right: 17px;
}

.tray-kbd {
  margin-right: 4px;
}

.clock {
  margin-left: 5px;
  font-size: 13px;
  color: #ddd;
}
</style>

<style>
html, body {
  margin: 0;
  background: #f0f0f0;
}
</style>
